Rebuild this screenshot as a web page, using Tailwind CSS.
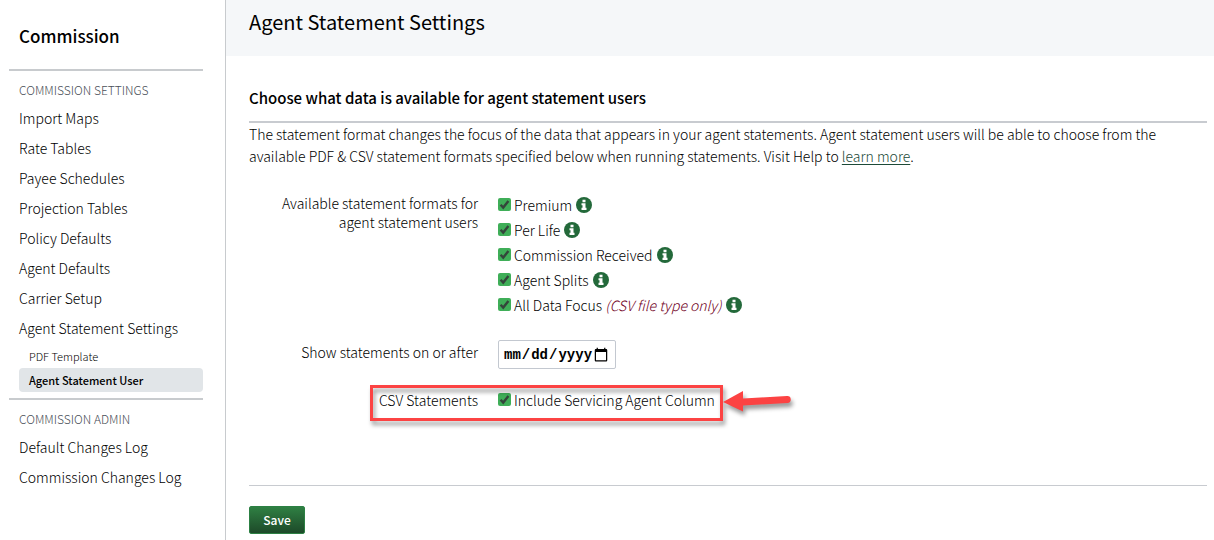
<!DOCTYPE html>
<html lang="en">
<head>
    <meta charset="UTF-8">
    <meta name="viewport" content="width=device-width, initial-scale=1.0">
    <title>Agent Statement Settings</title>
    <script src="https://cdn.jsdelivr.net/npm/@tailwindcss/browser@4"></script>
</head>
<body class="bg-white text-black text-sm font-light font-['Noto_Sans_CJK_SC','Noto_Sans',sans-serif]">
    <!-- shared icons -->
    <svg class="hidden">
        <symbol id="icon-info" viewBox="0 0 16 16">
            <circle cx="8" cy="8" r="8" fill="#23693a"/>
            <path d="M6.5 2.800h3v2.500h-3zM5.500 6.300h4v4.500h1V13h-5v-2.200h1V8.300h-1z" fill="#fff"/>
        </symbol>
        <symbol id="icon-check" viewBox="0 0 13 13">
            <path d="M2.6 6.8l2.6 2.8L10.4 3" fill="none" stroke="#34453b" stroke-width="2.4"/>
        </symbol>
    </svg>

    <div class="flex min-h-screen">
        <aside class="w-[226px] shrink-0 border-r border-[#c8cbce] pl-[9px] pr-[22px]">
            <h2 class="h-[69px] pt-6 pl-[10px] text-[17px] leading-6 font-medium">Commission</h2>
            <nav class="border-t-2 border-[#c8cbce] pt-[6px]">
                <h3 class="pl-[10px] pb-px text-xs leading-[25px] text-[#4a4f58]">COMMISSION SETTINGS</h3>
                <ul class="pl-[10px] leading-[30px]">
                    <li><a href="#">Import Maps</a></li>
                    <li><a href="#">Rate Tables</a></li>
                    <li><a href="#">Payee Schedules</a></li>
                    <li><a href="#">Projection Tables</a></li>
                    <li><a href="#">Policy Defaults</a></li>
                    <li><a href="#">Agent Defaults</a></li>
                    <li><a href="#">Carrier Setup</a></li>
                    <li>
                        <a href="#">Agent Statement Settings</a>
                        <ul class="pt-px text-[11px] leading-6">
                            <li><a href="#" class="block px-[10px]">PDF Template</a></li>
                            <li><a href="#" class="block rounded bg-[#e1e5e8] px-[10px] font-medium">Agent Statement User</a></li>
                        </ul>
                    </li>
                </ul>
            </nav>
            <nav class="mt-[6px] border-t-2 border-[#c8cbce] pt-[6px]">
                <h3 class="pl-[10px] pb-px text-xs leading-[25px] text-[#4a4f58]">COMMISSION ADMIN</h3>
                <ul class="pl-[10px] leading-[30px]">
                    <li><a href="#">Default Changes Log</a></li>
                    <li><a href="#">Commission Changes Log</a></li>
                </ul>
            </nav>
        </aside>

        <main class="min-w-0 flex-1">
            <header class="h-14 bg-[#f5f7f9] pt-2 pl-[23px]">
                <h1 class="text-xl leading-7 font-normal">Agent Statement Settings</h1>
            </header>

            <form class="pt-[30px] pl-[23px] pr-[7px]">
                <h2 class="border-b-2 border-[#c8cbd0] pb-[11px] text-[15px] leading-6 font-medium">Choose what data is available for agent statement users</h2>
                <p class="max-w-[940px] leading-[22px]">The statement format changes the focus of the data that appears in your agent statements. Agent statement users will be able to choose from the available PDF &amp; CSV statement formats specified below when running statements. Visit Help to <a href="#" class="text-[#1d4a38] underline underline-offset-2">learn more</a>.</p>

                <fieldset class="mt-[26px] grid grid-cols-[229px_1fr] gap-x-5" aria-labelledby="formats">
                    <div id="formats" class="pt-px pl-7 text-right leading-[19px]">Available statement formats for agent statement users</div>
                    <div class="leading-[25px]">
                        <div class="flex items-center gap-1">
                            <label class="flex items-center gap-[3px]">
                                <span class="mb-[2px] grid"><input type="checkbox" checked class="col-start-1 row-start-1 size-[13px] appearance-none rounded-xs bg-[#3fae58]"><svg class="pointer-events-none col-start-1 row-start-1 size-[13px]"><use href="#icon-check"/></svg></span>
                                Premium
                            </label>
                            <svg class="mb-[2px] size-4"><use href="#icon-info"/></svg>
                        </div>
                        <div class="flex items-center gap-1">
                            <label class="flex items-center gap-[3px]">
                                <span class="mb-[2px] grid"><input type="checkbox" checked class="col-start-1 row-start-1 size-[13px] appearance-none rounded-xs bg-[#3fae58]"><svg class="pointer-events-none col-start-1 row-start-1 size-[13px]"><use href="#icon-check"/></svg></span>
                                Per Life
                            </label>
                            <svg class="mb-[2px] size-4"><use href="#icon-info"/></svg>
                        </div>
                        <div class="flex items-center gap-1">
                            <label class="flex items-center gap-[3px]">
                                <span class="mb-[2px] grid"><input type="checkbox" checked class="col-start-1 row-start-1 size-[13px] appearance-none rounded-xs bg-[#3fae58]"><svg class="pointer-events-none col-start-1 row-start-1 size-[13px]"><use href="#icon-check"/></svg></span>
                                Commission Received
                            </label>
                            <svg class="mb-[2px] size-4"><use href="#icon-info"/></svg>
                        </div>
                        <div class="flex items-center gap-1">
                            <label class="flex items-center gap-[3px]">
                                <span class="mb-[2px] grid"><input type="checkbox" checked class="col-start-1 row-start-1 size-[13px] appearance-none rounded-xs bg-[#3fae58]"><svg class="pointer-events-none col-start-1 row-start-1 size-[13px]"><use href="#icon-check"/></svg></span>
                                Agent Splits
                            </label>
                            <svg class="mb-[2px] size-4"><use href="#icon-info"/></svg>
                        </div>
                        <div class="flex items-center gap-1">
                            <label class="flex items-center gap-[3px]">
                                <span class="mb-[2px] grid"><input type="checkbox" checked class="col-start-1 row-start-1 size-[13px] appearance-none rounded-xs bg-[#3fae58]"><svg class="pointer-events-none col-start-1 row-start-1 size-[13px]"><use href="#icon-check"/></svg></span>
                                <span>All Data Focus <em class="text-[#70001c]">(CSV file type only)</em></span>
                            </label>
                            <svg class="mb-[2px] size-4"><use href="#icon-info"/></svg>
                        </div>
                    </div>
                </fieldset>

                <div class="mt-[22px] grid grid-cols-[229px_1fr] gap-x-5">
                    <label for="start-date" class="text-right leading-[25px]">Show statements on or after</label>
                    <input id="start-date" type="date" class="h-[29px] w-[118px] rounded-xs border border-[#c3c8d0] pl-1 pr-[6px] font-['Liberation_Mono',monospace] text-sm font-bold [&::-webkit-calendar-picker-indicator]:size-4 [&::-webkit-calendar-picker-indicator]:p-0 [&::-webkit-calendar-picker-indicator]:ml-0">
                </div>

                <div class="relative mt-[18px] grid grid-cols-[229px_1fr] gap-x-5 leading-[26px]">
                    <div class="text-right">CSV Statements</div>
                    <label class="flex items-center gap-[3px]">
                        <span class="mb-[2px] grid"><input type="checkbox" checked class="col-start-1 row-start-1 size-[13px] appearance-none rounded-xs bg-[#3fae58]"><svg class="pointer-events-none col-start-1 row-start-1 size-[13px]"><use href="#icon-check"/></svg></span>
                        Include Servicing Agent Column
                    </label>
                    <!-- callout frame and arrow -->
                    <svg class="pointer-events-none absolute -top-2 left-[115px] h-[52px] w-[440px] overflow-visible" viewBox="0 0 440 52">
                        <g class="drop-shadow-[2px_4px_2px_rgba(0,0,0,0.4)]">
                            <rect x="7.5" y="7.5" width="350" height="33" fill="none" stroke="#fc4343" stroke-width="3"/>
                            <path d="M359 23l20-11v7.5l44-2.5a3.500 3.500 0 0 1 .5 7l-44.500 2.500v6z" fill="#fc4343"/>
                        </g>
                    </svg>
                </div>

                <div class="mt-[72px] border-t border-[#c8cbd0] pt-5">
                    <button type="button" class="h-7 w-14 rounded-xs border border-[#2c8043] bg-linear-to-b from-[#2f8043] to-[#1d4a29] text-xs font-medium text-white">Save</button>
                </div>
            </form>
        </main>
    </div>
</body>
</html>
